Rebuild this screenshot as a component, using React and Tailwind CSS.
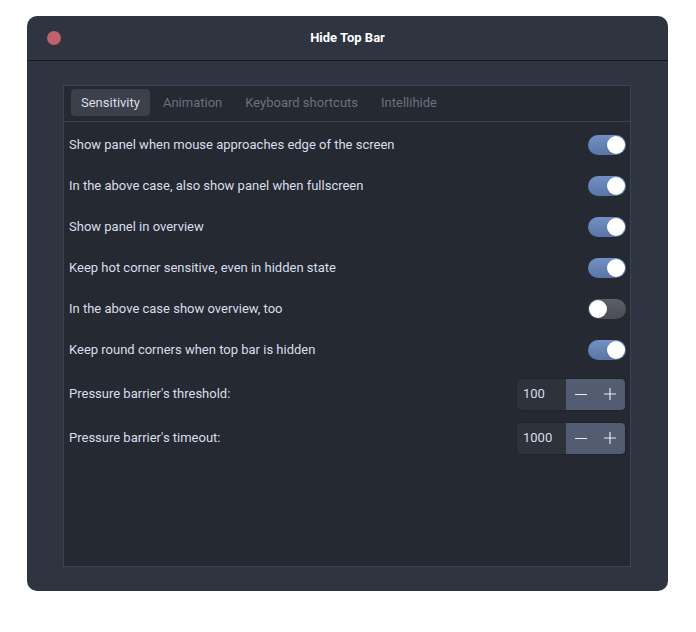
import React, { useState } from 'react';

// Toggle rows shown in the Sensitivity tab
const switches = [
    { label: 'Show panel when mouse approaches edge of the screen', on: true },
    { label: 'In the above case, also show panel when fullscreen', on: true },
    { label: 'Show panel in overview', on: true },
    { label: 'Keep hot corner sensitive, even in hidden state', on: true },
    { label: 'In the above case show overview, too', on: false },
    { label: 'Keep round corners when top bar is hidden', on: true },
];

const tabs = ['Sensitivity', 'Animation', 'Keyboard shortcuts', 'Intellihide'];

const Toggle = ({ on }) => (
    <div
        className={
            on
                ? 'w-[38px] h-[20px] rounded-full bg-gradient-to-b from-[#7390c4] to-[#5a76a8] flex items-center justify-end px-[1px]'
                : 'w-[38px] h-[20px] rounded-full bg-gradient-to-b from-[#5c5f66] to-[#4a4d54] flex items-center justify-start px-[1px]'
        }
    >
        <div className="w-[18px] h-[18px] rounded-full bg-white shadow-sm" />
    </div>
);

const SpinButton = ({ value }) => (
    <div className="flex h-[33px] w-[110px] rounded-[5px] overflow-hidden border border-[#1f232b]">
        <div className="w-[49px] bg-[#2e323b] text-[#d8dee9] text-[13px] flex items-center pl-[6px]">
            {value}
        </div>
        <div className="flex-1 bg-[#535d71] flex text-[#e5e9f0]">
            <div className="w-1/2 flex items-center justify-center">
                <svg width="12" height="12" viewBox="0 0 12 12">
                    <path d="M0 6.5h12" stroke="currentColor" strokeWidth="1.2" />
                </svg>
            </div>
            <div className="w-1/2 flex items-center justify-center">
                <svg width="12" height="12" viewBox="0 0 12 12">
                    <path d="M0 6h12M6 0v12" stroke="currentColor" strokeWidth="1.2" />
                </svg>
            </div>
        </div>
    </div>
);

const App = () => {
    const [active] = useState(0);

    return (
        <div
            className="w-[696px] h-[632px] bg-white pt-[16px] pl-[27px]"
            style={{ fontFamily: 'Roboto, "Liberation Sans", sans-serif' }}
        >
            <div className="w-[641px] h-[575px] rounded-[10px] bg-[#2e3440] flex flex-col overflow-hidden">
                {/* Title bar */}
                <div className="h-[45px] flex items-center relative border-b border-[#16191e]">
                    <div className="absolute left-[20px] top-[15px] w-[14px] h-[14px] rounded-full bg-[#bf616a]" />
                    <div className="flex-1 text-center text-white text-[13px] font-bold">Hide Top Bar</div>
                </div>

                {/* Body */}
                <div className="flex-1 pt-[24px] pb-[24px] pl-[36px] pr-[37px] flex">
                    <div className="flex-1 bg-[#252932] border border-[#3d4352] flex flex-col">
                        {/* Tabs */}
                        <div className="h-[36px] border-b border-[#3d4352] flex items-start pt-[3px] pl-[7px] gap-[3px]">
                            {tabs.map((t, i) => (
                                <div
                                    key={t}
                                    className={
                                        i === active
                                            ? 'h-[27px] px-[10px] rounded-[4px] bg-[#3b404b] text-[#d8dee9] text-[13px] flex items-center'
                                            : 'h-[27px] px-[10px] text-[#6b717d] text-[13px] flex items-center'
                                    }
                                >
                                    {t}
                                </div>
                            ))}
                        </div>

                        {/* Rows */}
                        <div className="flex flex-col pt-[2px] pl-[5px] pr-[4px]">
                            {switches.map((s) => (
                                <div key={s.label} className="h-[41px] flex items-center justify-between">
                                    <span className="text-[13px] text-[#d8dee9]">{s.label}</span>
                                    <Toggle on={s.on} />
                                </div>
                            ))}
                            <div className="h-[44px] mt-[2px] flex items-center justify-between">
                                <span className="text-[13px] text-[#d8dee9]">Pressure barrier's threshold:</span>
                                <SpinButton value="100" />
                            </div>
                            <div className="h-[44px] flex items-center justify-between">
                                <span className="text-[13px] text-[#d8dee9]">Pressure barrier's timeout:</span>
                                <SpinButton value="1000" />
                            </div>
                        </div>
                    </div>
                </div>
            </div>
        </div>
    );
};

export default App;
